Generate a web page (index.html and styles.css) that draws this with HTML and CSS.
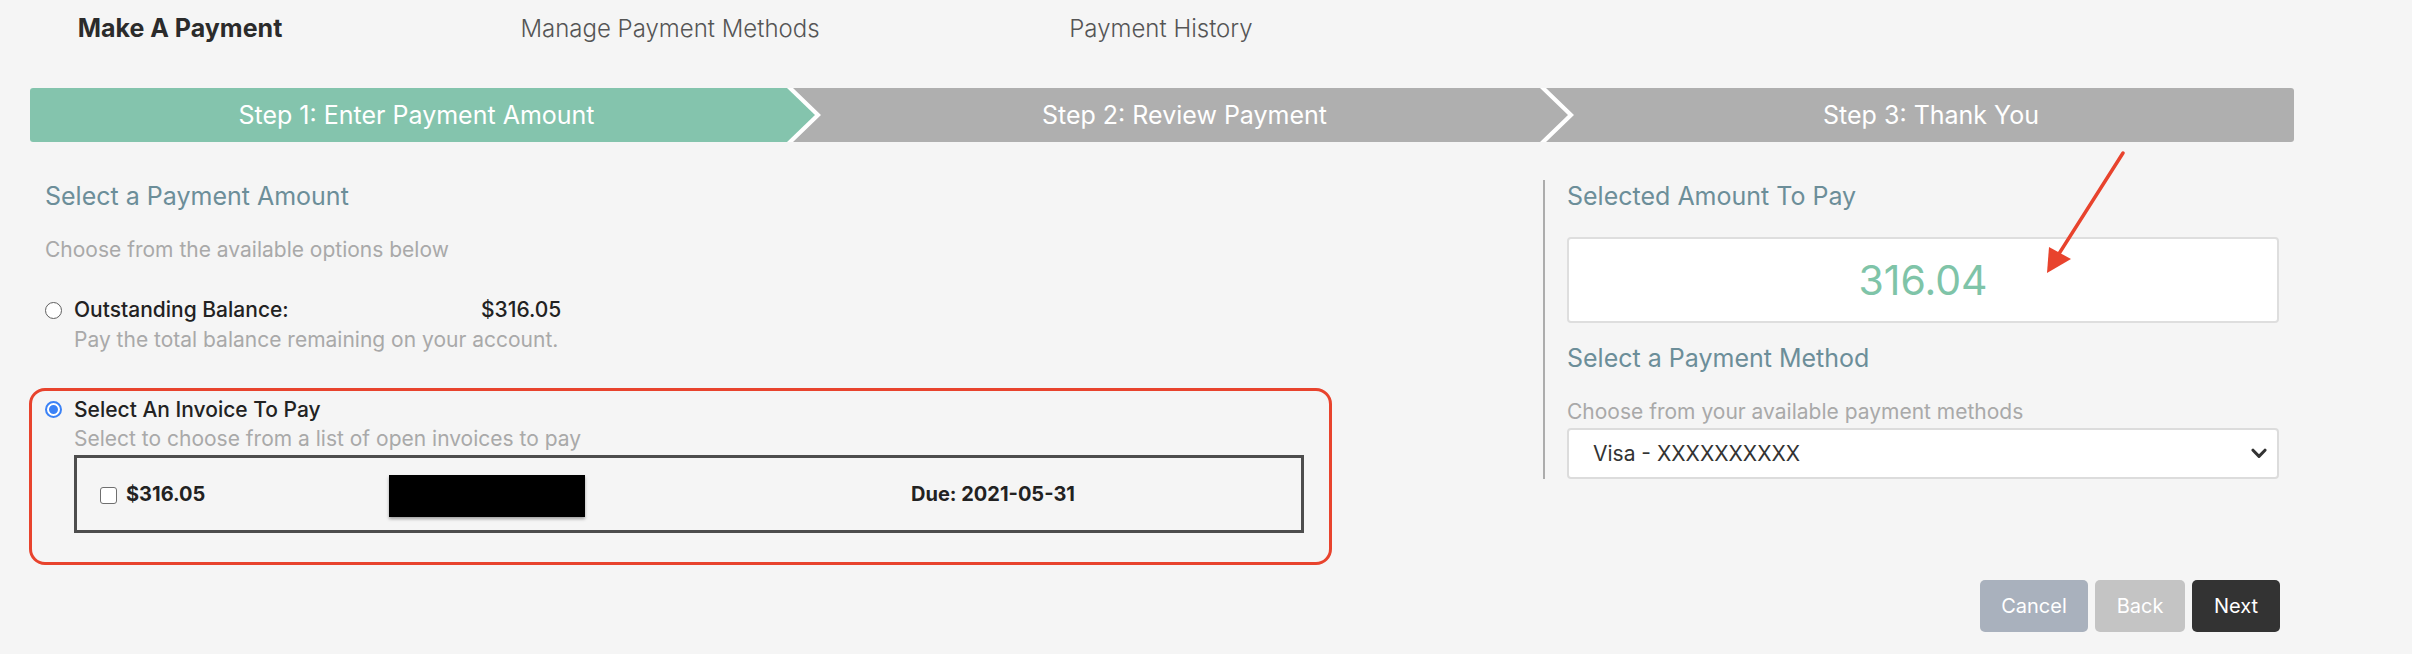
FILE: index.html
```html
<!DOCTYPE html>
<html lang="en">
<head>
<meta charset="utf-8">
<title>Make A Payment</title>
<link rel="stylesheet" href="styles.css">
</head>
<body>
<div class="page">
  <nav class="tabs">
    <a class="tab active">Make A Payment</a>
    <a class="tab">Manage Payment Methods</a>
    <a class="tab">Payment History</a>
  </nav>

  <div class="steps">
    <div class="step step-first active"><span>Step 1: Enter Payment Amount</span></div>
    <div class="step step-mid"><span>Step 2: Review Payment</span></div>
    <div class="step step-last"><span>Step 3: Thank You</span></div>
  </div>

  <div class="columns">
    <section class="col-left">
      <h2 class="heading">Select a Payment Amount</h2>
      <p class="hint">Choose from the available options below</p>

      <div class="option">
        <span class="radio"></span>
        <div class="option-body">
          <div class="option-title"><span class="balance-label">Outstanding Balance:</span><span>$316.05</span></div>
          <div class="option-desc">Pay the total balance remaining on your account.</div>
        </div>
      </div>

      <div class="option option-invoice">
        <span class="radio checked"></span>
        <div class="option-body">
          <div class="option-title">Select An Invoice To Pay</div>
          <div class="option-desc">Select to choose from a list of open invoices to pay</div>
          <div class="invoice-box">
            <div class="invoice-cell first"><span class="checkbox"></span><strong>$316.05</strong></div>
            <div class="invoice-cell"><span class="redacted"></span></div>
            <div class="invoice-cell"><strong>Due: 2021-05-31</strong></div>
          </div>
        </div>
      </div>
    </section>

    <section class="col-right">
      <h2 class="heading">Selected Amount To Pay</h2>
      <div class="amount-box">316.04</div>
      <h2 class="heading method-heading">Select a Payment Method</h2>
      <p class="hint tight">Choose from your available payment methods</p>
      <div class="select">
        <span>Visa - XXXXXXXXXX</span>
        <svg class="chevron" viewBox="0 0 16 11" width="16" height="11"><path d="M2 2.2 L8 8.4 L14 2.2" fill="none" stroke="#333" stroke-width="3" stroke-linecap="round" stroke-linejoin="round"/></svg>
      </div>
    </section>
  </div>

  <div class="actions">
    <button class="btn btn-cancel">Cancel</button>
    <button class="btn btn-back">Back</button>
    <button class="btn btn-next">Next</button>
  </div>

  <svg class="annotation" width="2412" height="654" viewBox="0 0 2412 654">
    <line x1="2123" y1="153" x2="2055" y2="260" stroke="#e8432d" stroke-width="3.5" stroke-linecap="round"/>
    <polygon points="2047,273 2049,247 2071,259" fill="#e8432d"/>
  </svg>
</div>
</body>
</html>
```

FILE: styles.css
```css
* { box-sizing: border-box; }

html, body {
  margin: 0;
  padding: 0;
  background: #f5f5f5;
}

body {
  font-family: Inter, "Open Sans", "Liberation Sans", sans-serif;
  color: #222;
  width: 2412px;
  height: 654px;
  overflow: hidden;
}

.page {
  position: relative;
  padding: 14px 118px 0 30px;
  height: 654px;
}

/* Tabs */
.tabs {
  display: grid;
  grid-template-columns: 360px 620px 362px;
  justify-items: center;
  margin-left: -30px;
}

.tab {
  font-size: 24px;
  line-height: 29px;
  font-weight: 300;
  color: #555;
  white-space: nowrap;
}

.tab.active {
  font-size: 25px;
  font-weight: 700;
  color: #2b2b2b;
}

/* Steps */
.steps {
  display: flex;
  height: 54px;
  margin-top: 45px;
  background: #ffffff;
  border-radius: 3px;
  overflow: hidden;
}

.step {
  display: flex;
  align-items: center;
  justify-content: center;
  background: #afafaf;
  color: #fff;
  font-size: 25px;
  font-weight: 400;
  white-space: nowrap;
}

.step.active { background: #84c4ad; }

.step-first {
  flex: 0 0 785px;
  padding-right: 12px;
  clip-path: polygon(0 0, calc(100% - 28px) 0, 100% 50%, calc(100% - 28px) 100%, 0 100%);
}

.step-mid {
  flex: 0 0 775px;
  margin-left: -22px;
  padding-left: 8px;
  clip-path: polygon(0 0, calc(100% - 28px) 0, 100% 50%, calc(100% - 28px) 100%, 0 100%, 28px 50%);
}

.step-last {
  flex: 1 1 auto;
  margin-left: -22px;
  padding-left: 22px;
  clip-path: polygon(0 0, 100% 0, 100% 100%, 0 100%, 28px 50%);
}

/* Columns */
.columns {
  display: flex;
  align-items: flex-start;
  margin-top: 38px;
}

.col-left {
  flex: 0 0 1513px;
  padding: 2px 0 0 15px;
}

.col-right {
  flex: 1 1 auto;
  border-left: 2px solid #acacac;
  padding: 2px 15px 0 22px;
}

.heading {
  margin: 0;
  font-size: 25px;
  line-height: 29px;
  font-weight: 400;
  color: #6c8e99;
}

.hint {
  margin: 24px 0 0;
  font-size: 21px;
  line-height: 30px;
  color: #a9a9a9;
}

.hint.tight {
  margin-top: 27px;
  line-height: 24px;
}

/* Options */
.option {
  display: flex;
  align-items: flex-start;
  gap: 12px;
  margin-top: 30px;
}

.radio {
  flex: 0 0 17px;
  width: 17px;
  height: 17px;
  margin-top: 7px;
  border-radius: 50%;
  border: 1px solid #5f5f5f;
  background: #fff;
}

.radio.checked {
  border: 2px solid #3b82f6;
  background: #3b82f6;
  box-shadow: inset 0 0 0 2px #fff;
  margin-top: 6px;
  background-clip: content-box;
  padding: 1px;
}

.option-body {
  flex: 1 1 auto;
}

.option-title {
  font-size: 21px;
  line-height: 30px;
  font-weight: 500;
  color: #222;
}

.balance-label {
  display: inline-block;
  width: 407px;
}

.option-desc {
  font-size: 21px;
  line-height: 30px;
  color: #a9a9a9;
}

.option-invoice {
  width: 1303px;
  margin-left: -16px;
  margin-top: 33px;
  padding: 4px 25px 29px 13px;
  border: 3px solid #e8432d;
  border-radius: 16px;
}

.option-invoice .option-title,
.option-invoice .option-desc {
  line-height: 29px;
}

.invoice-box {
  display: grid;
  grid-template-columns: 312px 522px 1fr;
  align-items: center;
  height: 78px;
  margin-top: 2px;
  border: 3px solid #4d4d4d;
}

.invoice-cell {
  display: flex;
  align-items: center;
  font-size: 20px;
  color: #222;
}

.invoice-cell.first {
  padding-left: 23px;
  gap: 9px;
}

.invoice-cell strong { font-weight: 700; }

.checkbox {
  width: 17px;
  height: 17px;
  border: 1px solid #6f6f6f;
  border-radius: 3px;
  background: #fff;
  margin-top: 3px;
}

.redacted {
  display: block;
  width: 196px;
  height: 42px;
  margin-top: 4px;
  background: #000;
  box-shadow: 0 2px 3px rgba(0, 0, 0, 0.35);
}

/* Right column */
.amount-box {
  display: flex;
  align-items: center;
  justify-content: center;
  height: 86px;
  margin-top: 26px;
  background: #fff;
  border: 2px solid #dedede;
  border-radius: 4px;
  font-size: 41px;
  color: #7fc4a8;
}

.method-heading { margin-top: 21px; }

.select {
  display: flex;
  align-items: center;
  justify-content: space-between;
  height: 51px;
  margin-top: 4px;
  padding: 0 10px 0 24px;
  background: #fff;
  border: 2px solid #dcdcdc;
  border-radius: 4px;
  font-size: 21px;
  color: #333;
}

/* Actions */
.actions {
  display: flex;
  justify-content: flex-end;
  gap: 7px;
  margin-top: 15px;
  padding-right: 14px;
}

.btn {
  height: 52px;
  padding: 0 20px;
  border: none;
  border-radius: 5px;
  font-family: inherit;
  font-size: 20px;
  color: #fff;
}

.btn-cancel { background: #a9b1bd; min-width: 108px; }
.btn-back { background: #c4c4c4; min-width: 90px; }
.btn-next { background: #333333; min-width: 88px; }

.annotation {
  position: absolute;
  top: 0;
  left: 0;
  pointer-events: none;
}
```
